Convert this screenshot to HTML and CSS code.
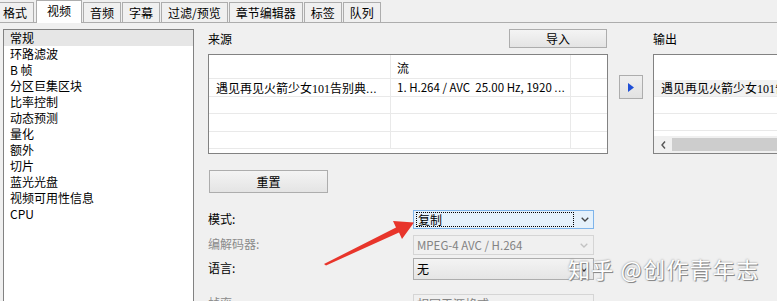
FILE: index.html
```html
<!DOCTYPE html>
<html lang="zh-CN">
<head>
<meta charset="utf-8">
<link rel="stylesheet" href="styles.css">
</head>
<body>
<div class="tabs">
  <div class="tab first">格式</div>
  <div class="tab active">视频</div>
  <div class="tab">音频</div>
  <div class="tab">字幕</div>
  <div class="tab">过滤/预览</div>
  <div class="tab">章节编辑器</div>
  <div class="tab">标签</div>
  <div class="tab">队列</div>
</div>
<div class="main">
  <ul class="nav-list">
    <li class="selected">常规</li>
    <li>环路滤波</li>
    <li>B 帧</li>
    <li>分区巨集区块</li>
    <li>比率控制</li>
    <li>动态预测</li>
    <li>量化</li>
    <li>额外</li>
    <li>切片</li>
    <li>蓝光光盘</li>
    <li>视频可用性信息</li>
    <li>CPU</li>
  </ul>
  <div class="content">
    <div class="io-row">
      <section class="source">
        <div class="source-head">
          <span class="label">来源</span>
          <button class="btn btn-import">导入</button>
        </div>
        <div class="table src-table">
          <div class="trow head"><div class="cell c1"></div><div class="cell c2">流</div><div class="cell c3"></div></div>
          <div class="trow"><div class="cell c1">遇见再见火箭少女<span class="num">101</span>告别典<span class="ell">...</span></div><div class="cell c2 latin">1. H.264 / AVC&nbsp; 25.00 Hz, 1920 <span class="ell">...</span></div><div class="cell c3"></div></div>
          <div class="trow"><div class="cell c1"></div><div class="cell c2"></div><div class="cell c3"></div></div>
          <div class="trow"><div class="cell c1"></div><div class="cell c2"></div><div class="cell c3"></div></div>
          <div class="trow"><div class="cell c1"></div><div class="cell c2"></div><div class="cell c3"></div></div>
        </div>
      </section>
      <div class="move">
        <button class="arrow-btn"><svg width="6" height="9" viewBox="0 0 6 9"><polygon points="0,0 6,4.5 0,9" fill="#1f4fd6"/></svg></button>
      </div>
      <section class="output">
        <div class="label out-label">输出</div>
        <div class="table out-table">
          <div class="orow ohead"></div>
          <div class="orow sel">遇见再见火箭少女<span class="num">101</span>告别典礼.mp4</div>
          <div class="orow"></div>
          <div class="orow"></div>
          <div class="hscroll">
            <div class="sb-btn"><svg width="5" height="8" viewBox="0 0 5 8"><polyline points="4,0.5 1,4 4,7.5" fill="none" stroke="#555" stroke-width="1.4"/></svg></div>
            <div class="sb-thumb"></div>
          </div>
        </div>
      </section>
    </div>
    <button class="btn btn-reset">重置</button>
    <div class="form">
      <div class="frow r1">
        <label class="flabel">模式:</label>
        <div class="select sel-focus">
          <div class="sel-value focus-rect">复制</div>
          <div class="chev"><svg width="8" height="5" viewBox="0 0 8 5"><polyline points="0.7,0.7 4,4 7.3,0.7" fill="none" stroke="#444" stroke-width="1.3"/></svg></div>
        </div>
      </div>
      <div class="frow r2">
        <label class="flabel disabled">编解码器:</label>
        <div class="select sel-disabled">
          <div class="sel-value latin">MPEG-4 AVC / H.264</div>
          <div class="chev"><svg width="8" height="5" viewBox="0 0 8 5"><polyline points="0.7,0.7 4,4 7.3,0.7" fill="none" stroke="#c2c2c2" stroke-width="1.3"/></svg></div>
        </div>
      </div>
      <div class="frow r3">
        <label class="flabel">语言:</label>
        <div class="select sel-normal">
          <div class="sel-value">无</div>
          <div class="chev"><svg width="8" height="5" viewBox="0 0 8 5"><polyline points="0.7,0.7 4,4 7.3,0.7" fill="none" stroke="#333" stroke-width="1.3"/></svg></div>
        </div>
      </div>
      <div class="frow r4">
        <label class="flabel disabled">帧率:</label>
        <div class="select sel-disabled">
          <div class="sel-value">相同于源格式</div>
          <div class="chev"></div>
        </div>
      </div>
    </div>
  </div>
</div>
<svg class="annot" width="777" height="301" viewBox="0 0 777 301">
  <polygon points="324,264 396,227.5 393,221 414,222.5 402,239 399,232.5 326,265.5" fill="#e8352b"/>
</svg>
<div class="watermark">知乎 @创作青年志</div>
</body>
</html>
```

FILE: styles.css
```css
* {
  box-sizing: border-box;
  margin: 0;
  padding: 0;
}

html,
body {
  width: 777px;
  height: 301px;
  overflow: hidden;
}

body {
  position: relative;
  background: #f0f0f0;
  color: #000;
  font: 12px/16px "Noto Sans CJK SC", "Liberation Sans", sans-serif;
}

/* Tabs */
.tabs {
  display: flex;
  align-items: flex-end;
  height: 23px;
  border-bottom: 1px solid #adadad;
}

.tab {
  height: 20px;
  padding: 0 6px;
  margin-right: 1px;
  border: 1px solid #adadad;
  border-bottom: none;
  background: #f0f0f0;
  line-height: 19px;
  white-space: nowrap;
}

.tab.first {
  margin-left: -4px;
  margin-right: 1px;
}

.tab.active {
  height: 23px;
  margin-bottom: -1px;
  margin-left: 1px;
  padding: 0 10px;
  background: #fff;
  line-height: 19px;
}

/* Main area */
.main {
  display: flex;
  margin-top: 6px;
  height: 272px;
}

.nav-list {
  flex: none;
  list-style: none;
  width: 191px;
  height: 300px;
  margin-left: 3px;
  border: 1px solid #828282;
  background: #fff;
}

.nav-list li {
  height: 16px;
  line-height: 16px;
  padding-left: 6px;
  white-space: nowrap;
}

.nav-list li.selected {
  background: #e6e6e6;
}

.content {
  flex: 1;
  min-width: 0;
  padding-left: 14px;
}

.io-row {
  display: flex;
  align-items: flex-start;
}

.source {
  flex: none;
  width: 400px;
}

.source-head {
  display: flex;
  align-items: center;
  justify-content: space-between;
  height: 19px;
  padding-right: 1px;
}

.label {
  line-height: 19px;
}

.btn {
  font: inherit;
  color: #000;
  background: linear-gradient(#f4f4f4, #e4e4e4);
  border: 1px solid #adadad;
  cursor: default;
}

.btn-import {
  width: 98px;
  height: 19px;
  line-height: 16px;
}

/* Tables */
.table {
  margin-top: 6px;
  height: 100px;
  border: 1px solid #828282;
  background: #fff;
  overflow: hidden;
}

.trow {
  display: flex;
  height: 18px;
  border-bottom: 1px solid #e9e9e9;
}

.trow:nth-child(odd) {
  height: 17px;
}

.trow.head {
  height: 24px;
}

.cell {
  padding-left: 6px;
  border-right: 1px solid #e9e9e9;
  line-height: 17px;
  white-space: nowrap;
  overflow: hidden;
}

.trow.head .cell {
  padding-top: 3px;
  line-height: 20px;
}

.c1 {
  width: 182px;
  padding-left: 7px;
}

.c2 {
  width: 180px;
}

.c3 {
  flex: 1;
  border-right: none;
}

.latin {
  font-size: 11.5px;
}

.ell {
  font-family: "Liberation Sans", sans-serif;
  font-size: 12px;
  letter-spacing: 0.3px;
}

.num {
  font-family: "Liberation Serif", serif;
  font-size: 12px;
}

.move {
  flex: none;
  margin-left: 11px;
  margin-top: 46px;
}

.arrow-btn {
  display: flex;
  align-items: center;
  justify-content: center;
  width: 24px;
  height: 24px;
  border: 1px solid #adadad;
  background: linear-gradient(#efefef, #e2e2e2);
}

.output {
  flex: none;
  width: 200px;
  margin-left: 10px;
}

.out-label {
  height: 19px;
}

.out-table {
  display: flex;
  flex-direction: column;
  width: 200px;
}

.orow {
  flex: none;
  height: 17px;
  padding-left: 7px;
  border-bottom: 1px solid #e9e9e9;
  line-height: 16px;
  white-space: nowrap;
  overflow: hidden;
}

.orow.ohead {
  height: 25px;
  border-bottom: none;
}

.orow.sel {
  background: #f2f2f2;
}

.hscroll {
  display: flex;
  height: 17px;
  margin-top: auto;
  background: #f0f0f0;
}

.sb-btn {
  display: flex;
  align-items: center;
  justify-content: center;
  width: 18px;
}

.sb-thumb {
  flex: 1;
  margin: 2px 0;
  background: #cdcdcd;
}

.btn-reset {
  display: block;
  width: 119px;
  height: 23px;
  margin-top: 16px;
  margin-left: 1px;
  line-height: 20px;
}

/* Form */
.form {
  margin-top: 17px;
}

.frow {
  display: flex;
  align-items: center;
}

.r1 {
  height: 19px;
}

.r2 {
  height: 20px;
  margin-top: 6px;
}

.r3 {
  height: 22px;
  margin-top: 3px;
}

.r4 {
  height: 20px;
  margin-top: 14px;
}

.flabel {
  flex: none;
  width: 205px;
  margin-top: -2px;
}

.flabel.disabled {
  color: #8b8b8b;
}

.select {
  display: flex;
  align-items: center;
  width: 181px;
  height: 100%;
  border: 1px solid #adadad;
}

.sel-value {
  flex: none;
  width: 158px;
  padding-left: 3px;
  white-space: nowrap;
  overflow: hidden;
}

.sel-focus {
  background: #e5f1fb;
  border-color: #7eb4ea;
}

.focus-rect {
  height: 15px;
  margin-left: 2px;
  padding-left: 1px;
  border: 1px dotted #000;
  line-height: 13px;
}

.sel-disabled {
  border-color: #d5d5d5;
  background: #f0f0f0;
  color: #838383;
}

.sel-normal {
  background: linear-gradient(#f3f3f3, #e5e5e5);
}

.chev {
  display: flex;
  flex: 1;
  align-items: center;
  justify-content: center;
  padding-left: 2px;
}

.chev svg {
  display: block;
}

/* Overlays */
.annot {
  position: absolute;
  top: 0;
  left: 0;
  pointer-events: none;
}

.watermark {
  position: absolute;
  left: 568px;
  top: 255px;
  font-family: "Noto Sans CJK SC", sans-serif;
  font-size: 22px;
  line-height: 26px;
  letter-spacing: 1.3px;
  color: #fff;
  white-space: nowrap;
  text-shadow: 1px 1px 0 #8a8a8a, 0 0 2px #7a7a7a;
  pointer-events: none;
}
```
